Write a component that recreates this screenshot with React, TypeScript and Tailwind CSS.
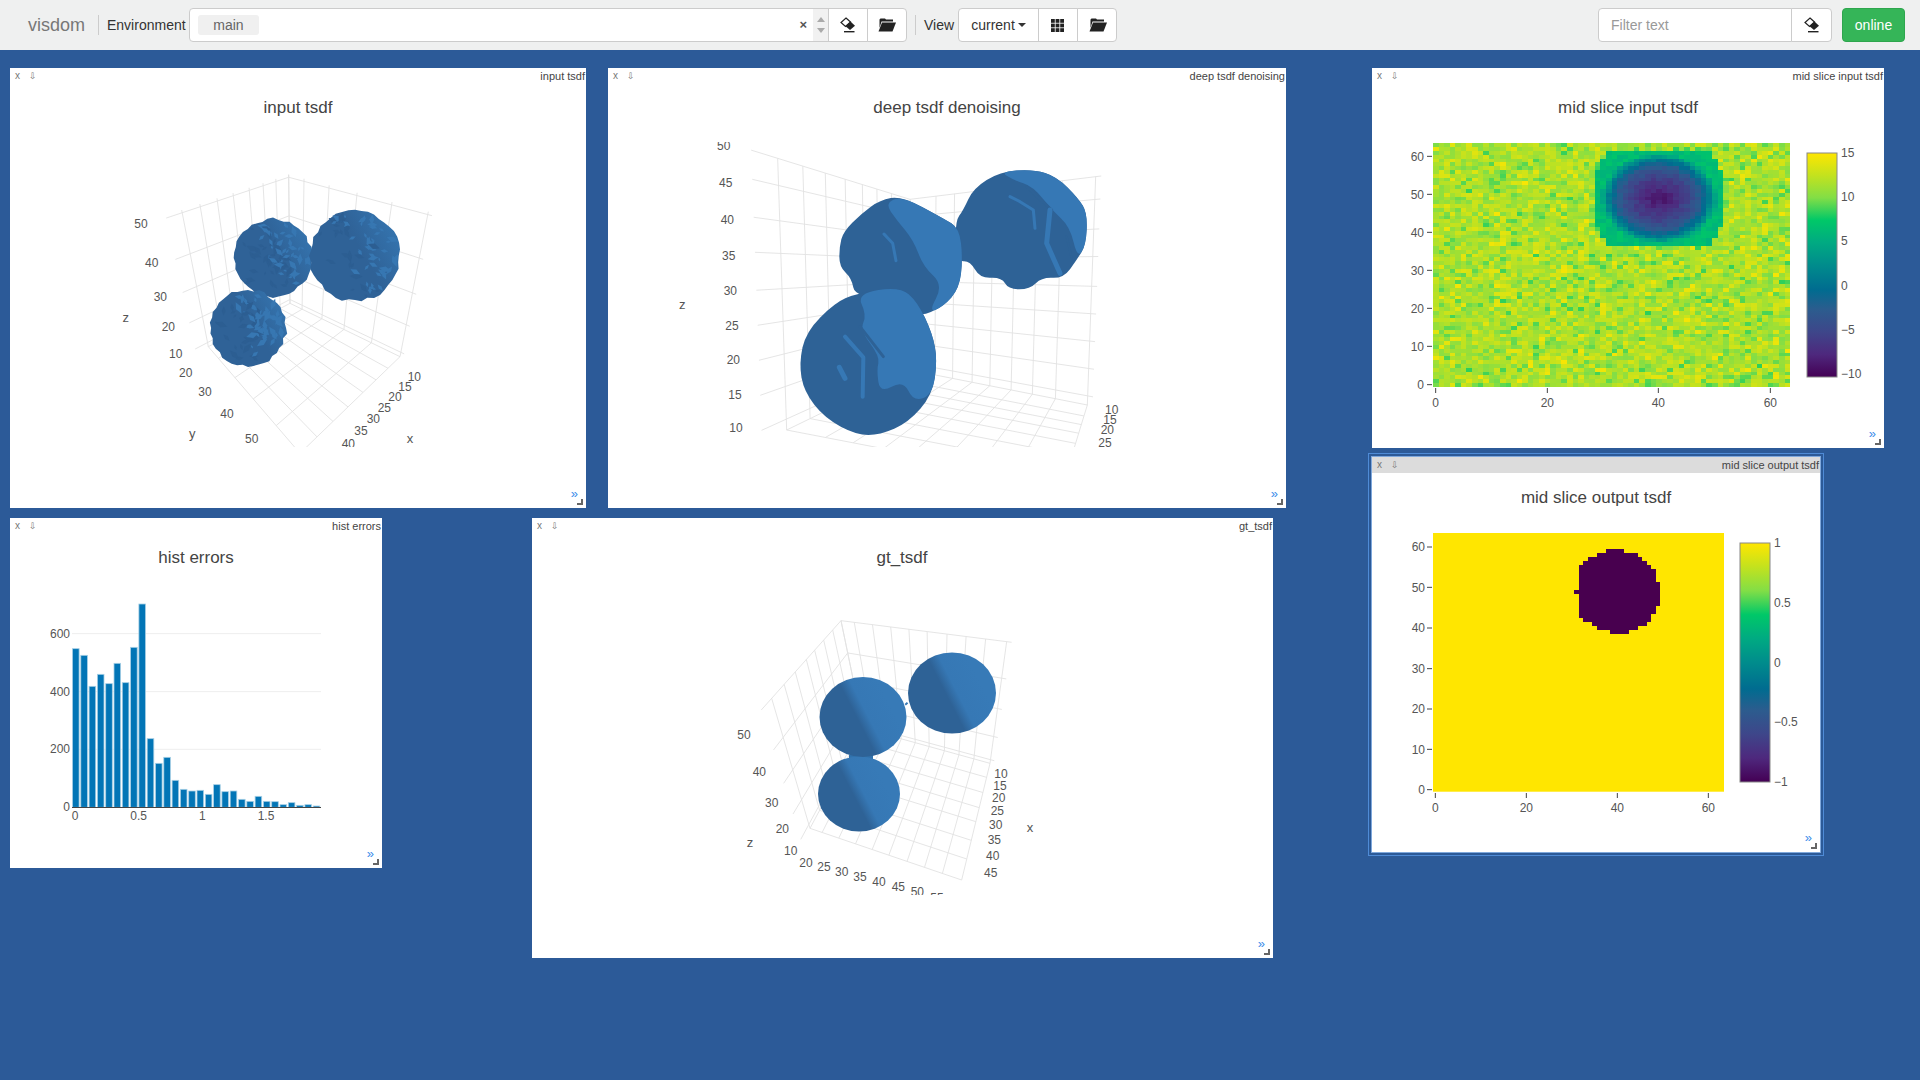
import React from 'react';

type Pt = [number, number];

const rng = (seed: number) => () => {
  seed |= 0;
  seed = (seed + 0x6d2b79f5) | 0;
  let t = Math.imul(seed ^ (seed >>> 15), 1 | seed);
  t = (t + Math.imul(t ^ (t >>> 7), 61 | t)) ^ t;
  return ((t ^ (t >>> 14)) >>> 0) / 4294967296;
};

const lerp = (a: Pt, b: Pt, t: number): Pt => [a[0] + (b[0] - a[0]) * t, a[1] + (b[1] - a[1]) * t];

// sampled from the colorbar in the screenshot
const STOPS: [number, number[]][] = [
  [0, [68, 0, 84]],
  [0.1, [78, 40, 125]],
  [0.2, [62, 70, 138]],
  [0.3, [44, 92, 142]],
  [0.39, [0, 108, 144]],
  [0.5, [0, 140, 140]],
  [0.6, [0, 170, 130]],
  [0.7, [0, 200, 104]],
  [0.8, [130, 222, 70]],
  [0.9, [195, 226, 30]],
  [1, [255, 230, 0]],
];

const viridis = (t: number) => {
  t = Math.max(0, Math.min(1, t));
  for (let i = 1; i < STOPS.length; i++) {
    if (t <= STOPS[i][0]) {
      const [t0, c0] = STOPS[i - 1];
      const [t1, c1] = STOPS[i];
      const k = (t - t0) / (t1 - t0);
      return `rgb(${c0.map((c, j) => Math.round(c + (c1[j] - c) * k)).join(',')})`;
    }
  }
  return 'rgb(255,230,0)';
};

const Chevron = () => (
  <span className="absolute right-[8px] bottom-[8px] text-[13px] leading-[13px] text-[#3b8eea]">»</span>
);

interface PanelProps {
  title: string;
  pos: string;
  viewBox: string;
  focused?: boolean;
  children: React.ReactNode;
}

const Panel = ({ title, pos, viewBox, focused, children }: PanelProps) => (
  <div className={`absolute bg-white ${pos} ${focused ? 'shadow-[0_0_0_1px_#7fa8dc,0_0_0_3px_#2c5a98,0_0_0_4px_#4f8bd6]' : ''}`}>
    <svg className="absolute inset-0 w-full h-full" viewBox={viewBox}>
      {children}
    </svg>
    <div className={`relative flex items-center h-[16px] text-[11px] leading-[16px] text-[#444] ${focused ? 'bg-[#dcdcdc]' : ''}`}>
      <span className="ml-[5px] w-[14px] text-[10px] text-[#777]">x</span>
      <span className="text-[9px] text-[#777] font-['DejaVu_Sans',sans-serif]">⇩</span>
      <span className="ml-auto mr-px">{title}</span>
    </div>
    <Chevron />
    <div className="absolute right-[3px] bottom-[3px] w-[6px] h-[6px] border-r-2 border-b-2 border-[#666]" />
  </div>
);

const Title = ({ x, y, children }: { x: number; y: number; children: string }) => (
  <text x={x} y={y + 2} textAnchor="middle" dominantBaseline="middle" fontSize={17} fill="#444">
    {children}
  </text>
);

const Label = ({ x, y, t, anchor = 'middle', size = 12 }: { x: number; y: number; t: string; anchor?: 'start' | 'middle' | 'end'; size?: number }) => (
  <text x={x} y={y + 1} textAnchor={anchor} dominantBaseline="middle" fontSize={size} fill="#555">
    {t}
  </text>
);

interface BoxProps {
  ox: number;
  oy: number;
  bt: Pt; lt: Pt; rt: Pt; b: Pt; l: Pt; r: Pt; f: Pt;
  ls: number[]; rs: number[]; zs: number[];
  ext: number;
  labels: [number, number, string][];
}

// 3d scene grid, coordinates are given in 3x crop pixels from (ox, oy)
const Box = ({ ox, oy, bt, lt, rt, b, l, r, f, ls, rs, zs, ext, labels }: BoxProps) => {
  const P = (p: Pt): Pt => [ox + p[0] / 3, oy + p[1] / 3];
  const lines: [Pt, Pt][] = [];
  zs.forEach((z) => {
    const c = lerp(b, bt, z);
    const a = lerp(l, lt, z);
    lines.push([lerp(c, a, 1 + ext), c]);
    lines.push([c, lerp(c, lerp(r, rt, z), 1.03)]);
  });
  ls.forEach((t) => {
    const bot = lerp(l, b, t);
    lines.push([lerp(lt, bt, t), bot]);
    lines.push([bot, lerp(f, r, t)]);
  });
  rs.forEach((t) => {
    const bot = lerp(r, b, t);
    lines.push([lerp(rt, bt, t), bot]);
    lines.push([bot, lerp(f, l, t)]);
  });
  return (
    <g>
      {lines.map(([p, q], i) => {
        const [x1, y1] = P(p);
        const [x2, y2] = P(q);
        return <line key={i} x1={x1} y1={y1} x2={x2} y2={y2} stroke="#e2e2e2" strokeWidth={0.9} />;
      })}
      {labels.map(([x, y, t], i) => (
        <Label key={i} x={ox + x / 3} y={oy + y / 3} t={t} size={t.length === 1 ? 13 : 12} />
      ))}
    </g>
  );
};

const NoisyBlob = ({ cx, cy, r, seed }: { cx: number; cy: number; r: number; seed: number }) => {
  const rand = rng(seed);
  const outline: string[] = [];
  for (let i = 0; i < 44; i++) {
    const a = (i / 44) * Math.PI * 2;
    const rr = r + (rand() - 0.5) * 3.2;
    outline.push(`${cx + Math.cos(a) * rr},${cy + Math.sin(a) * rr}`);
  }
  const facets: { pts: string; fill: string }[] = [];
  for (let i = 0; i < 110; i++) {
    const a = rand() * Math.PI * 2;
    const d = Math.sqrt(rand()) * (r - 3);
    const x = cx + Math.cos(a) * d;
    const y = cy + Math.sin(a) * d;
    const side = (x - cx) / r - ((y - cy) / r) * 0.4;
    if (side < -0.25 && rand() < 0.85) continue;
    const lit = side + (rand() - 0.5) * 0.9 > 0.1;
    const s = 2 + rand() * 4.5;
    const rot = rand() * Math.PI;
    const pts = [0, 1, 2, 3]
      .map((k) => {
        const ang = rot + (k * Math.PI) / 2;
        const len = k % 2 ? s * 0.45 : s;
        return `${x + Math.cos(ang) * len},${y + Math.sin(ang) * len}`;
      })
      .join(' ');
    facets.push({ pts, fill: lit ? '#3777b2' : '#2c5e92' });
  }
  return (
    <g>
      <polygon points={outline.join(' ')} fill="url(#blob-grad)" />
      {facets.map((f, i) => (
        <polygon key={i} points={f.pts} fill={f.fill} />
      ))}
    </g>
  );
};

const Input3D = () => (
  <>
    <defs>
      <clipPath id="clip1">
        <rect x={100} y={130} width={420} height={317} />
      </clipPath>
      <linearGradient id="blob-grad" x1="0.3" y1="0.7" x2="1" y2="0.3">
        <stop offset="0.45" stopColor="#2f6297" />
        <stop offset="0.95" stopColor="#3472ac" />
      </linearGradient>
    </defs>
    <Title x={298} y={107}>input tsdf</Title>
    <g clipPath="url(#clip1)">
      <Box
        ox={100}
        oy={160}
        bt={[566, 44]}
        lt={[245, 150]}
        rt={[985, 155]}
        b={[570, 430]}
        l={[325, 560]}
        r={[900, 590]}
        f={[600, 880]}
        ls={[0, 0.17, 0.33, 0.48, 0.63, 0.76, 0.88, 1]}
        rs={[0, 0.26, 0.51, 0.71, 0.89, 1]}
        zs={[0.03, 0.22, 0.44, 0.68, 0.98]}
        ext={0.15}
        labels={[
          [123, 190, '50'], [155, 307, '40'], [181, 410, '30'], [205, 500, '20'], [227, 580, '10'], [77, 473, 'z'],
          [257, 637, '20'], [315, 695, '30'], [381, 760, '40'], [455, 835, '50'], [277, 820, 'y'],
          [943, 650, '10'], [915, 680, '15'], [885, 710, '20'], [853, 742, '25'], [820, 775, '30'], [783, 813, '35'], [745, 852, '40'], [930, 835, 'x'],
        ]}
      />
      <NoisyBlob cx={273} cy={258} r={39} seed={11} />
      <NoisyBlob cx={355} cy={256} r={45} seed={23} />
      <NoisyBlob cx={248} cy={328} r={38} seed={37} />
    </g>
  </>
);

const tr2 = (p: number[]): Pt => [680 + p[0] / 3, 130 + p[1] / 3];

// rounds a traced outline: quadratic curves through the edge midpoints
const smooth = (pts: number[][]) => {
  const q = pts.map(tr2);
  const mid = (a: Pt, b: Pt): Pt => [(a[0] + b[0]) / 2, (a[1] + b[1]) / 2];
  const start = mid(q[q.length - 1], q[0]);
  let d = `M${start[0]} ${start[1]}`;
  q.forEach((p, i) => {
    const m = mid(p, q[(i + 1) % q.length]);
    d += ` Q${p[0]} ${p[1]} ${m[0]} ${m[1]}`;
  });
  return d + ' Z';
};

const Stripe = ({ pts, dark, w = 3 }: { pts: number[][]; dark?: boolean; w?: number }) => (
  <polyline
    points={pts.map(tr2).map((p) => p.join(',')).join(' ')}
    fill="none"
    stroke={dark ? '#2e6296' : '#3678b5'}
    strokeWidth={w}
    strokeLinejoin="round"
    strokeLinecap="round"
  />
);

const Deep3D = () => (
  <>
    <defs>
      <clipPath id="clip2">
        <rect x={660} y={142} width={500} height={305} />
      </clipPath>
    </defs>
    <Title x={947} y={107}>deep tsdf denoising</Title>
    <g clipPath="url(#clip2)">
      <Box
        ox={680}
        oy={130}
        bt={[690, 208]}
        lt={[293, 85]}
        rt={[1247, 140]}
        b={[690, 720]}
        l={[320, 900]}
        r={[1222, 825]}
        f={[1150, 1060]}
        ls={[0, 0.19, 0.36, 0.51, 0.64, 0.75, 0.86, 1]}
        rs={[0, 0.18, 0.31, 0.43, 0.55, 0.65, 0.76, 0.86, 1]}
        zs={[0.04, 0.16, 0.28, 0.4, 0.52, 0.65, 0.77, 0.9, 1.0]}
        ext={0.2}
        labels={[
          [131, 47, '50'], [137, 158, '45'], [142, 268, '40'], [146, 377, '35'], [151, 482, '30'], [156, 587, '25'], [160, 690, '20'], [165, 793, '15'], [168, 892, '10'], [7, 525, 'z'],
          [1295, 838, '10'], [1290, 868, '15'], [1282, 900, '20'], [1275, 938, '25'],
        ]}
      />
      {/* right sphere */}
      <path fill="#2e6296" d={smooth([[880, 175], [960, 125], [1060, 118], [1130, 140], [1195, 205], [1222, 250], [1218, 345], [1190, 390], [1150, 445], [1085, 442], [1050, 478], [985, 478], [965, 442], [900, 445], [870, 392], [830, 395], [825, 275], [850, 240]])} />
      <path fill="#3678b5" d={smooth([[960, 125], [1060, 118], [1130, 140], [1195, 205], [1222, 250], [1218, 345], [1192, 385], [1170, 290], [1115, 240], [1060, 170], [1000, 150]])} />
      <Stripe pts={[[990, 200], [1020, 215], [1060, 240], [1065, 295]]} />
      <Stripe pts={[[1040, 170], [1115, 240]]} dark />
      <Stripe pts={[[1110, 240], [1100, 340], [1140, 430]]} w={5} />
      <Stripe pts={[[1160, 320], [1175, 385]]} dark w={2} />
      {/* middle sphere */}
      <path fill="#2e6296" d={smooth([[545, 250], [600, 210], [665, 198], [790, 265], [838, 295], [848, 385], [838, 475], [790, 530], [715, 562], [700, 520], [525, 500], [515, 445], [478, 410], [478, 350], [490, 305]])} />
      <path fill="#3678b5" d={smooth([[615, 220], [665, 198], [790, 265], [838, 295], [848, 385], [838, 475], [790, 530], [745, 548], [790, 465], [730, 410], [700, 330], [650, 270]])} />
      <Stripe pts={[[612, 312], [638, 340], [648, 392]]} />
      {/* bottom sphere */}
      <path fill="#2e6296" d={smooth([[465, 518], [530, 490], [660, 470], [712, 515], [757, 610], [772, 690], [757, 795], [685, 878], [600, 915], [530, 915], [435, 865], [372, 785], [357, 700], [378, 605]])} />
      <path fill="#3678b5" d={smooth([[530, 490], [660, 470], [712, 515], [757, 610], [772, 690], [757, 795], [700, 815], [670, 750], [600, 790], [590, 720], [600, 680], [540, 600], [560, 555]])} />
      <Stripe pts={[[495, 620], [550, 682], [548, 800]]} w={4} />
      <Stripe pts={[[540, 590], [610, 680]]} dark />
      <Stripe pts={[[478, 712], [495, 745]]} w={5} />
    </g>
  </>
);

const GtSphere = ({ cx, cy, rx, ry }: { cx: number; cy: number; rx: number; ry: number }) => (
  <ellipse cx={cx} cy={cy} rx={rx} ry={ry} fill="url(#gt-grad)" />
);

const Gt3D = () => (
  <>
    <defs>
      <clipPath id="clip4">
        <rect x={720} y={600} width={420} height={295} />
      </clipPath>
      <linearGradient id="gt-grad" x1="0.15" y1="0.75" x2="0.85" y2="0.42">
        <stop offset="0.46" stopColor="#2e6296" />
        <stop offset="0.62" stopColor="#3678b5" />
        <stop offset="1" stopColor="#377ab7" />
      </linearGradient>
    </defs>
    <Title x={902} y={557}>gt_tsdf</Title>
    <g clipPath="url(#clip4)">
      <Box
        ox={720}
        oy={600}
        bt={[363, 62]}
        lt={[155, 295]}
        rt={[860, 125]}
        b={[430, 385]}
        l={[270, 685]}
        r={[810, 490]}
        f={[725, 840]}
        ls={[0, 0.18, 0.34, 0.5, 0.62, 0.75, 0.88, 1]}
        rs={[0, 0.127, 0.245, 0.36, 0.48, 0.59, 0.7, 0.81, 0.92, 1]}
        zs={[0.03, 0.22, 0.45, 0.7, 1]}
        ext={0.15}
        labels={[
          [72, 403, '50'], [118, 515, '40'], [155, 607, '30'], [187, 685, '20'], [212, 752, '10'], [90, 728, 'z'],
          [258, 787, '20'], [312, 800, '25'], [365, 815, '30'], [420, 830, '35'], [477, 845, '40'], [535, 860, '45'], [592, 875, '50'], [651, 892, '55'],
          [843, 520, '10'], [840, 557, '15'], [836, 593, '20'], [832, 632, '25'], [827, 674, '30'], [823, 718, '35'], [818, 766, '40'], [812, 817, '45'], [930, 682, 'x'],
        ]}
      />
      <rect x={905} y={703} width={3} height={2} fill="#3678b5" transform="rotate(-40 906 704)" />
      <polygon points="849,755 873,755 873,760 849,760" fill="#3072ad" />
      <GtSphere cx={952} cy={693} rx={44} ry={40.5} />
      <GtSphere cx={859} cy={794} rx={41} ry={37.5} />
      <GtSphere cx={863} cy={717} rx={43.5} ry={40} />
    </g>
  </>
);

const HIST_TOPS = [416, 436, 529, 493, 521, 460, 518, 412, 282, 686, 760, 742, 811, 838, 843, 841, 853, 824, 845, 843, 868, 874, 859, 874, 875, 884, 878, 886, 884, 888];

const Hist = () => (
  <>
    <Title x={196} y={557}>hist errors</Title>
    {[371, 545, 718].map((y) => (
      <line key={y} x1={72} x2={321} y1={510 + y / 3} y2={510 + y / 3} stroke="#eee" strokeWidth={1} />
    ))}
    {HIST_TOPS.map((top, i) => (
      <rect
        key={i}
        x={72.5 + i * 8.3}
        y={510 + top / 3}
        width={6.6}
        height={(892 - top) / 3}
        fill="#0275b6"
        stroke="#a6cfe5"
        strokeWidth={0.8}
      />
    ))}
    <line x1={72} x2={321} y1={807.5} y2={807.5} stroke="#444" strokeWidth={1} />
    {[['600', 371], ['400', 545], ['200', 717], ['0', 890]].map(([t, y]) => (
      <Label key={t} x={70} y={510 + (y as number) / 3} t={t as string} anchor="end" />
    ))}
    {[['0', 225], ['0.5', 416], ['1', 607], ['1.5', 798]].map(([t, x]) => (
      <Label key={t} x={(x as number) / 3} y={816} t={t as string} />
    ))}
  </>
);

const Colorbar = ({ id, x, y, w, h }: { id: string; x: number; y: number; w: number; h: number }) => (
  <>
    <defs>
      <linearGradient id={id} x1="0" y1="1" x2="0" y2="0">
        {STOPS.map(([t]) => (
          <stop key={t} offset={t} stopColor={viridis(t)} />
        ))}
      </linearGradient>
    </defs>
    <rect x={x} y={y} width={w} height={h} fill={`url(#${id})`} stroke="#888" strokeWidth={1} />
  </>
);

const noiseCells = (() => {
  const rand = rng(77);
  const cells: { c: number; r: number; fill: string }[] = [];
  for (let r = 0; r < 64; r++) {
    for (let c = 0; c < 64; c++) {
      const dx = c - 40;
      const dy = r - 49;
      const inside = Math.abs(dx / 11.6) ** 2.6 + Math.abs(dy / 16) ** 2.6 <= 1 && Math.abs(dy) <= 12;
      let t;
      if (inside) {
        const d = Math.min(1, 1.1 * Math.sqrt((dx / 11.5) ** 2 + (dy / 13) ** 2));
        t = 0.04 + 0.3 * d + 0.32 * d ** 5 + (rand() - 0.5) * 0.06;
      } else {
        t = 0.86 + (rand() + rand() - 1) * 0.13;
      }
      cells.push({ c, r, fill: viridis(t) });
    }
  }
  return cells;
})();

const SliceIn = () => (
  <>
    <Title x={1628} y={107}>mid slice input tsdf</Title>
    <g shapeRendering="crispEdges">
      {noiseCells.map(({ c, r, fill }) => (
        <rect key={`${c}-${r}`} x={1433 + c * 5.58} y={386.7 - (r + 1) * 3.803} width={5.7} height={3.9} fill={fill} />
      ))}
    </g>
    {[['60', 79], ['50', 193], ['40', 307], ['30', 421], ['20', 535], ['10', 649], ['0', 764]].map(([t, y]) => (
      <g key={t}>
        <Label x={1424} y={130 + (y as number) / 3} t={t as string} anchor="end" />
        <line x1={1427} x2={1432} y1={130 + (y as number) / 3} y2={130 + (y as number) / 3} stroke="#444" />
      </g>
    ))}
    {[['0', 167], ['20', 502], ['40', 835], ['60', 1171]].map(([t, x]) => (
      <g key={t}>
        <Label x={1380 + (x as number) / 3} y={403} t={t as string} />
        <line x1={1380 + (x as number) / 3} x2={1380 + (x as number) / 3} y1={388} y2={393} stroke="#444" />
      </g>
    ))}
    <Colorbar id="cb1" x={1807} y={153} w={30} h={224} />
    {[['15', 68], ['10', 199], ['5', 331], ['0', 466], ['−5', 598], ['−10', 730]].map(([t, y]) => (
      <Label key={t} x={1841} y={130 + (y as number) / 3} t={t as string} anchor="start" />
    ))}
  </>
);

// rows of the dark disc, x ranges in 3x crop pixels
const DISC: [number, number, number, number][] = [
  [297, 309, 738, 792], [309, 321, 711, 834], [321, 333, 684, 846], [333, 345, 669, 861], [345, 357, 657, 873],
  [357, 396, 657, 888], [396, 420, 657, 900], [420, 432, 642, 900], [432, 468, 657, 900], [468, 491, 657, 888],
  [491, 503, 657, 873], [503, 515, 669, 873], [515, 527, 696, 861], [527, 539, 711, 834], [539, 552, 750, 807],
];

const SliceOut = () => (
  <>
    <Title x={1596} y={497}>mid slice output tsdf</Title>
    <rect x={1433} y={533} width={291} height={258.7} fill="#ffe600" />
    <g shapeRendering="crispEdges">
      {DISC.map(([y0, y1, x0, x1]) => (
        <rect key={y0} x={1360 + x0 / 3} y={450 + y0 / 3} width={(x1 - x0) / 3} height={(y1 - y0) / 3} fill="#48004f" />
      ))}
    </g>
    {[['60', 291], ['50', 412], ['40', 534], ['30', 656], ['20', 777], ['10', 898], ['0', 1019]].map(([t, y]) => (
      <g key={t}>
        <Label x={1425} y={450 + (y as number) / 3} t={t as string} anchor="end" />
        <line x1={1427} x2={1432} y1={450 + (y as number) / 3} y2={450 + (y as number) / 3} stroke="#444" />
      </g>
    ))}
    {[['0', 226], ['20', 499], ['40', 772], ['60', 1045]].map(([t, x]) => (
      <g key={t}>
        <Label x={1360 + (x as number) / 3} y={808} t={t as string} />
        <line x1={1360 + (x as number) / 3} x2={1360 + (x as number) / 3} y1={793} y2={798} stroke="#444" />
      </g>
    ))}
    <Colorbar id="cb2" x={1740} y={543} w={30} h={239} />
    {[['1', 278], ['0.5', 458], ['0', 637], ['−0.5', 815], ['−1', 995]].map(([t, y]) => (
      <Label key={t} x={1774} y={450 + (y as number) / 3} t={t as string} anchor="start" />
    ))}
  </>
);

const EraseIcon = () => (
  <svg viewBox="0 0 16 16" className="w-[16px] h-[16px]">
    <polygon points="6,1 10.5,5 5.5,9.5 1,5.5" fill="#fff" stroke="#222" strokeWidth={1.2} />
    <polygon points="10.5,4.4 15,8.7 10,13 5.5,9.2" fill="#222" />
    <rect x={4} y={14} width={10.5} height={1.4} fill="#222" />
  </svg>
);

const FolderIcon = () => (
  <svg viewBox="0 0 18 14" className="w-[18px] h-[14px]">
    <polygon points="1.5,10 1.5,1.5 2.5,0.5 7,0.5 8,1.5 15,1.5 15,3.5 3.5,3.5" fill="#222" />
    <polygon points="4,4.5 18,4.5 14.5,13.5 0.5,13.5" fill="#222" />
  </svg>
);

const GridIcon = () => (
  <svg viewBox="0 0 13 13" className="w-[13px] h-[13px]">
    {[0, 4.6, 9.2].map((y) =>
      [0, 4.6, 9.2].map((x) => <rect key={`${x}-${y}`} x={x} y={y} width={3.8} height={3.8} fill="#222" />),
    )}
  </svg>
);

const iconBtn = 'flex items-center justify-center h-[34px] bg-white border border-[#ccc] -ml-px';

const Sep = () => <span className="block w-px h-[20px] bg-[#ccc]" />;

const App: React.FC = () => {
  return (
    <div className="flex flex-col h-screen overflow-hidden bg-[#2c5a98] font-['Liberation_Sans',sans-serif]">
      <nav className="flex items-center shrink-0 h-[50px] bg-[#eff0f0] text-[14px] text-[#333]">
        <span className="ml-[28px] w-[70px] text-[18px] text-[#777]">visdom</span>
        <Sep />
        <span className="ml-[8px] w-[82px]">Environment</span>
        <div className="flex items-center w-[640px] h-[34px] bg-white border border-[#ccc] rounded-l-[4px]">
          <span className="flex items-center justify-center ml-[8px] w-[61px] h-[20px] rounded-[3px] bg-[#f0f0f0] text-[#666]">main</span>
          <span className="ml-auto mr-[6px] text-[13px] font-bold text-[#555]">×</span>
          <div className="flex flex-col items-center justify-center gap-[6px] w-[15px] h-full bg-[#f1f1f1]">
            <span className="w-0 h-0 border-x-[4px] border-b-[5px] border-x-transparent border-b-[#aaa]" />
            <span className="w-0 h-0 border-x-[4px] border-t-[5px] border-x-transparent border-t-[#aaa]" />
          </div>
        </div>
        <button className={`${iconBtn} w-[40px]`}><EraseIcon /></button>
        <button className={`${iconBtn} w-[40px] rounded-r-[4px]`}><FolderIcon /></button>
        <span className="ml-[8px]"><Sep /></span>
        <span className="ml-[8px] w-[34px]">View</span>
        <button className="flex items-center justify-center gap-[3px] w-[81px] h-[34px] bg-white border border-[#ccc] rounded-l-[4px]">
          current
          <span className="w-0 h-0 border-x-[4px] border-t-[4px] border-x-transparent border-t-[#333]" />
        </button>
        <button className={`${iconBtn} w-[40px] pr-[2px]`}><GridIcon /></button>
        <button className={`${iconBtn} w-[40px] pl-[2px] rounded-r-[4px]`}><FolderIcon /></button>
        <div className="flex items-center ml-auto h-[34px] w-[194px] px-[12px] bg-white border border-[#ccc] rounded-l-[4px] text-[#999]">Filter text</div>
        <button className={`${iconBtn} w-[41px] rounded-r-[4px]`}><EraseIcon /></button>
        <button className="ml-[10px] mr-[15px] w-[63px] h-[34px] rounded-[4px] bg-[#35b558] border border-[#2ea64e] text-white">online</button>
      </nav>
      <main className="relative flex-1">
        <Panel title="input tsdf" pos="left-[10px] top-[18px] w-[576px] h-[440px]" viewBox="10 68 576 440"><Input3D /></Panel>
        <Panel title="deep tsdf denoising" pos="left-[608px] top-[18px] w-[678px] h-[440px]" viewBox="608 68 678 440"><Deep3D /></Panel>
        <Panel title="mid slice input tsdf" pos="left-[1372px] top-[18px] w-[512px] h-[380px]" viewBox="1372 68 512 380"><SliceIn /></Panel>
        <Panel title="mid slice output tsdf" pos="left-[1372px] top-[407px] w-[448px] h-[395px]" viewBox="1372 457 448 395" focused><SliceOut /></Panel>
        <Panel title="hist errors" pos="left-[10px] top-[468px] w-[372px] h-[350px]" viewBox="10 518 372 350"><Hist /></Panel>
        <Panel title="gt_tsdf" pos="left-[532px] top-[468px] w-[741px] h-[440px]" viewBox="532 518 741 440"><Gt3D /></Panel>
      </main>
    </div>
  );
};

export default App;
